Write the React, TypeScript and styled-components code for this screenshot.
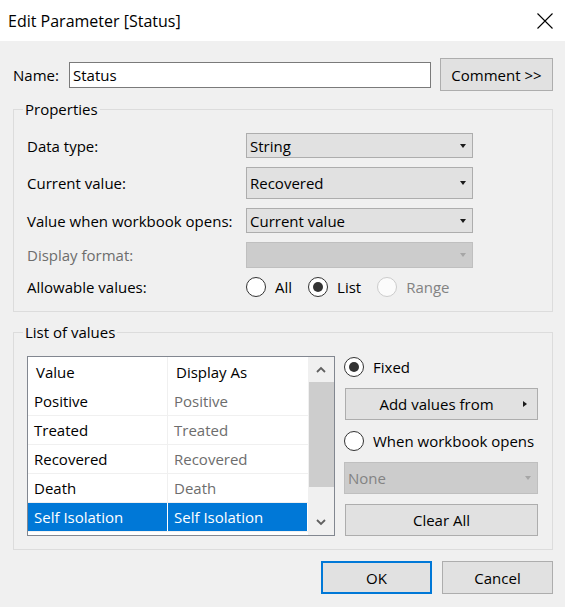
import React from "react";
import styled, { createGlobalStyle, css } from "styled-components";

const Global = createGlobalStyle`
  html, body { margin: 0; padding: 0; background: #f0f0f0; }
  body {
    font-family: "Open Sans", "Noto Sans", sans-serif;
    font-size: 15px;
    line-height: 20px;
    color: #000;
  }
  * { box-sizing: border-box; }
`;

const Dialog = styled.div`
  width: 565px;
  height: 607px;
  display: flex;
  flex-direction: column;
  background: #f0f0f0;
  overflow: hidden;
`;

const TitleBar = styled.div`
  height: 41px;
  flex-shrink: 0;
  background: #fff;
  display: flex;
  align-items: center;
  justify-content: space-between;
  padding-left: 8px;
`;

const Title = styled.div`
  font-size: 16px;
`;

const CloseBox = styled.div`
  width: 40px;
  height: 41px;
  display: flex;
  align-items: center;
  justify-content: center;
`;

const Content = styled.div`
  padding: 0 12px 0 13px;
  display: flex;
  flex-direction: column;
`;

const NameRow = styled.div`
  margin-top: 17px;
  height: 33px;
  display: flex;
  align-items: center;
`;

const NameLabel = styled.label`
  width: 56px;
`;

const TextInput = styled.div`
  width: 362px;
  height: 26px;
  border: 1px solid #7a7a7a;
  background: #fff;
  padding: 0 3px;
  display: flex;
  align-items: center;
  margin-right: 9px;
`;

const Button = styled.div<{ $w: number; $h?: number; $default?: boolean }>`
  width: ${(p) => p.$w}px;
  height: ${(p) => p.$h ?? 33}px;
  background: #e1e1e1;
  border: 1px solid #adadad;
  display: flex;
  align-items: center;
  justify-content: center;
  flex-shrink: 0;
  ${(p) =>
    p.$default &&
    css`
      border: 2px solid #0078d7;
    `}
`;

const Group = styled.fieldset<{ $pt: number; $pb: number; $mt: number }>`
  margin: ${(p) => p.$mt}px 0 0 0;
  border: 1px solid #dcdcdc;
  padding: ${(p) => p.$pt}px 13px ${(p) => p.$pb}px 13px;
  min-width: 0;
`;

const Legend = styled.legend`
  padding: 0 2px;
  margin-left: -4px;
  line-height: 20px;
`;

const PropGrid = styled.div`
  display: grid;
  grid-template-columns: 219px 227px;
  row-gap: 9px;
  align-items: center;
`;

const PropLabel = styled.div<{ $disabled?: boolean }>`
  color: ${(p) => (p.$disabled ? "#6d6d6d" : "#000")};
`;

const Combo = styled.div<{ $h: number; $disabled?: boolean; $w?: number }>`
  height: ${(p) => p.$h}px;
  ${(p) => (p.$w ? `width: ${p.$w}px;` : "")}
  border: 1px solid ${(p) => (p.$disabled ? "#bfbfbf" : "#adadad")};
  background: ${(p) => (p.$disabled ? "#cccccc" : "#e1e1e1")};
  color: ${(p) => (p.$disabled ? "#838383" : "#000")};
  display: flex;
  align-items: center;
  justify-content: space-between;
  padding: 0 6px 0 3px;
  flex-shrink: 0;
`;

const DownTri = styled.span<{ $disabled?: boolean }>`
  width: 0;
  height: 0;
  border-left: 3.5px solid transparent;
  border-right: 3.5px solid transparent;
  border-top: 4px solid ${(p) => (p.$disabled ? "#a6a6a6" : "#1a1a1a")};
`;

const RightTri = styled.span`
  width: 0;
  height: 0;
  border-top: 3.5px solid transparent;
  border-bottom: 3.5px solid transparent;
  border-left: 4px solid #1a1a1a;
`;

const RadioGroup = styled.div`
  display: flex;
  align-items: center;
  gap: 16px;
  height: 20px;
`;

const RadioOption = styled.label<{ $disabled?: boolean; $h?: number }>`
  display: flex;
  align-items: center;
  gap: 9px;
  color: ${(p) => (p.$disabled ? "#838383" : "#000")};
  height: ${(p) => p.$h ?? 20}px;
  flex-shrink: 0;
`;

const RadioCircle = styled.span<{ $checked?: boolean; $disabled?: boolean }>`
  width: 20px;
  height: 20px;
  border-radius: 50%;
  flex-shrink: 0;
  border: 1px solid ${(p) => (p.$disabled ? "#cccccc" : "#333333")};
  background: ${(p) => (p.$disabled ? "#fbfbfb" : "#fff")};
  display: flex;
  align-items: center;
  justify-content: center;
  &::after {
    content: "";
    width: 10px;
    height: 10px;
    border-radius: 50%;
    background: #333333;
    display: ${(p) => (p.$checked ? "block" : "none")};
  }
`;

const ListLayout = styled.div`
  display: flex;
  gap: 9px;
  align-items: flex-start;
`;

const Table = styled.div`
  width: 308px;
  height: 180px;
  border: 1px solid #828790;
  background: #fff;
  display: flex;
  flex-shrink: 0;
`;

const TableBody = styled.div`
  width: 280px;
  display: flex;
  flex-direction: column;
`;

const Row = styled.div<{ $header?: boolean }>`
  height: ${(p) => (p.$header ? 30 : 29)}px;
  display: grid;
  grid-template-columns: 140px 140px;
  border-bottom: ${(p) => (p.$header ? "none" : "1px solid #f0f0f0")};
`;

const Cell = styled.div<{ $header?: boolean; $selected?: boolean; $muted?: boolean; $divider?: boolean }>`
  display: flex;
  align-items: center;
  padding-left: ${(p) => (p.$header ? 8 : 6)}px;
  border-right: 1px solid ${(p) => (p.$divider && !p.$selected ? "#f0f0f0" : "#fff")};
  background: ${(p) => (p.$selected ? "#0078d7" : "transparent")};
  color: ${(p) => (p.$selected ? "#fff" : p.$muted ? "#6d6d6d" : "#000")};
  white-space: nowrap;
  overflow: hidden;
`;

const ScrollBar = styled.div`
  width: 26px;
  background: #f0f0f0;
  display: flex;
  flex-direction: column;
`;

const ScrollArrow = styled.div`
  height: 25px;
  display: flex;
  align-items: center;
  justify-content: center;
`;

const ScrollThumb = styled.div`
  height: 105px;
  margin-left: 1px;
  background: #cdcdcd;
`;

const ScrollSpacer = styled.div`
  flex: 1;
`;

const SideColumn = styled.div`
  width: 195px;
  display: flex;
  flex-direction: column;
  gap: 10px;
`;

const SideButton = styled(Button)`
  margin-left: 1px;
`;

const SplitButton = styled(SideButton)`
  justify-content: space-between;
  padding-right: 10px;
`;

const SplitText = styled.span`
  flex: 1;
  text-align: center;
  padding-left: 4px;
`;

const Footer = styled.div`
  margin-top: 11px;
  display: flex;
  justify-content: flex-end;
  gap: 10px;
`;

const Chevron = ({ up }: { up?: boolean }) => (
  <svg width="10" height="7" viewBox="0 0 10 7">
    <path
      d={up ? "M1 6 L5 2 L9 6" : "M1 1 L5 5 L9 1"}
      fill="none"
      stroke="#606060"
      strokeWidth="1.8"
    />
  </svg>
);

const rows = ["Positive", "Treated", "Recovered", "Death", "Self Isolation"];

export default function App() {
  return (
    <>
      <Global />
      <Dialog>
        <TitleBar>
          <Title>Edit Parameter [Status]</Title>
          <CloseBox>
            <svg width="16" height="16" viewBox="0 0 16 16">
              <path d="M0.5 0.5 L15.5 15.5 M15.5 0.5 L0.5 15.5" stroke="#000" strokeWidth="1.1" />
            </svg>
          </CloseBox>
        </TitleBar>
        <Content>
          <NameRow>
            <NameLabel>Name:</NameLabel>
            <TextInput>Status</TextInput>
            <Button $w={113}>Comment &gt;&gt;</Button>
          </NameRow>

          <Group $mt={8} $pt={14} $pb={14}>
            <Legend>Properties</Legend>
            <PropGrid>
              <PropLabel>Data type:</PropLabel>
              <Combo $h={25}>
                String
                <DownTri />
              </Combo>
              <PropLabel>Current value:</PropLabel>
              <Combo $h={32}>
                Recovered
                <DownTri />
              </Combo>
              <PropLabel>Value when workbook opens:</PropLabel>
              <Combo $h={25}>
                Current value
                <DownTri />
              </Combo>
              <PropLabel $disabled>Display format:</PropLabel>
              <Combo $h={26} $disabled>
                <span />
                <DownTri $disabled />
              </Combo>
              <PropLabel>Allowable values:</PropLabel>
              <RadioGroup>
                <RadioOption>
                  <RadioCircle />
                  All
                </RadioOption>
                <RadioOption>
                  <RadioCircle $checked />
                  List
                </RadioOption>
                <RadioOption $disabled>
                  <RadioCircle $disabled />
                  Range
                </RadioOption>
              </RadioGroup>
            </PropGrid>
          </Group>

          <Group $mt={10} $pt={14} $pb={13}>
            <Legend>List of values</Legend>
            <ListLayout>
              <Table>
                <TableBody>
                  <Row $header>
                    <Cell $header $divider>Value</Cell>
                    <Cell $header>Display As</Cell>
                  </Row>
                  {rows.map((r, i) => {
                    const sel = i === rows.length - 1;
                    return (
                      <Row key={r}>
                        <Cell $divider $selected={sel}>{r}</Cell>
                        <Cell $muted $selected={sel}>{r}</Cell>
                      </Row>
                    );
                  })}
                </TableBody>
                <ScrollBar>
                  <ScrollArrow>
                    <Chevron up />
                  </ScrollArrow>
                  <ScrollThumb />
                  <ScrollSpacer />
                  <ScrollArrow>
                    <Chevron />
                  </ScrollArrow>
                </ScrollBar>
              </Table>
              <SideColumn>
                <RadioOption $h={22}>
                  <RadioCircle $checked />
                  Fixed
                </RadioOption>
                <SplitButton $w={193} $h={32}>
                  <SplitText>Add values from</SplitText>
                  <RightTri />
                </SplitButton>
                <RadioOption $h={22}>
                  <RadioCircle />
                  When workbook opens
                </RadioOption>
                <Combo $h={32} $w={194} $disabled>
                  None
                  <DownTri $disabled />
                </Combo>
                <SideButton $w={193} $h={32}>Clear All</SideButton>
              </SideColumn>
            </ListLayout>
          </Group>

          <Footer>
            <Button $w={111} $default>OK</Button>
            <Button $w={111}>Cancel</Button>
          </Footer>
        </Content>
      </Dialog>
    </>
  );
}
